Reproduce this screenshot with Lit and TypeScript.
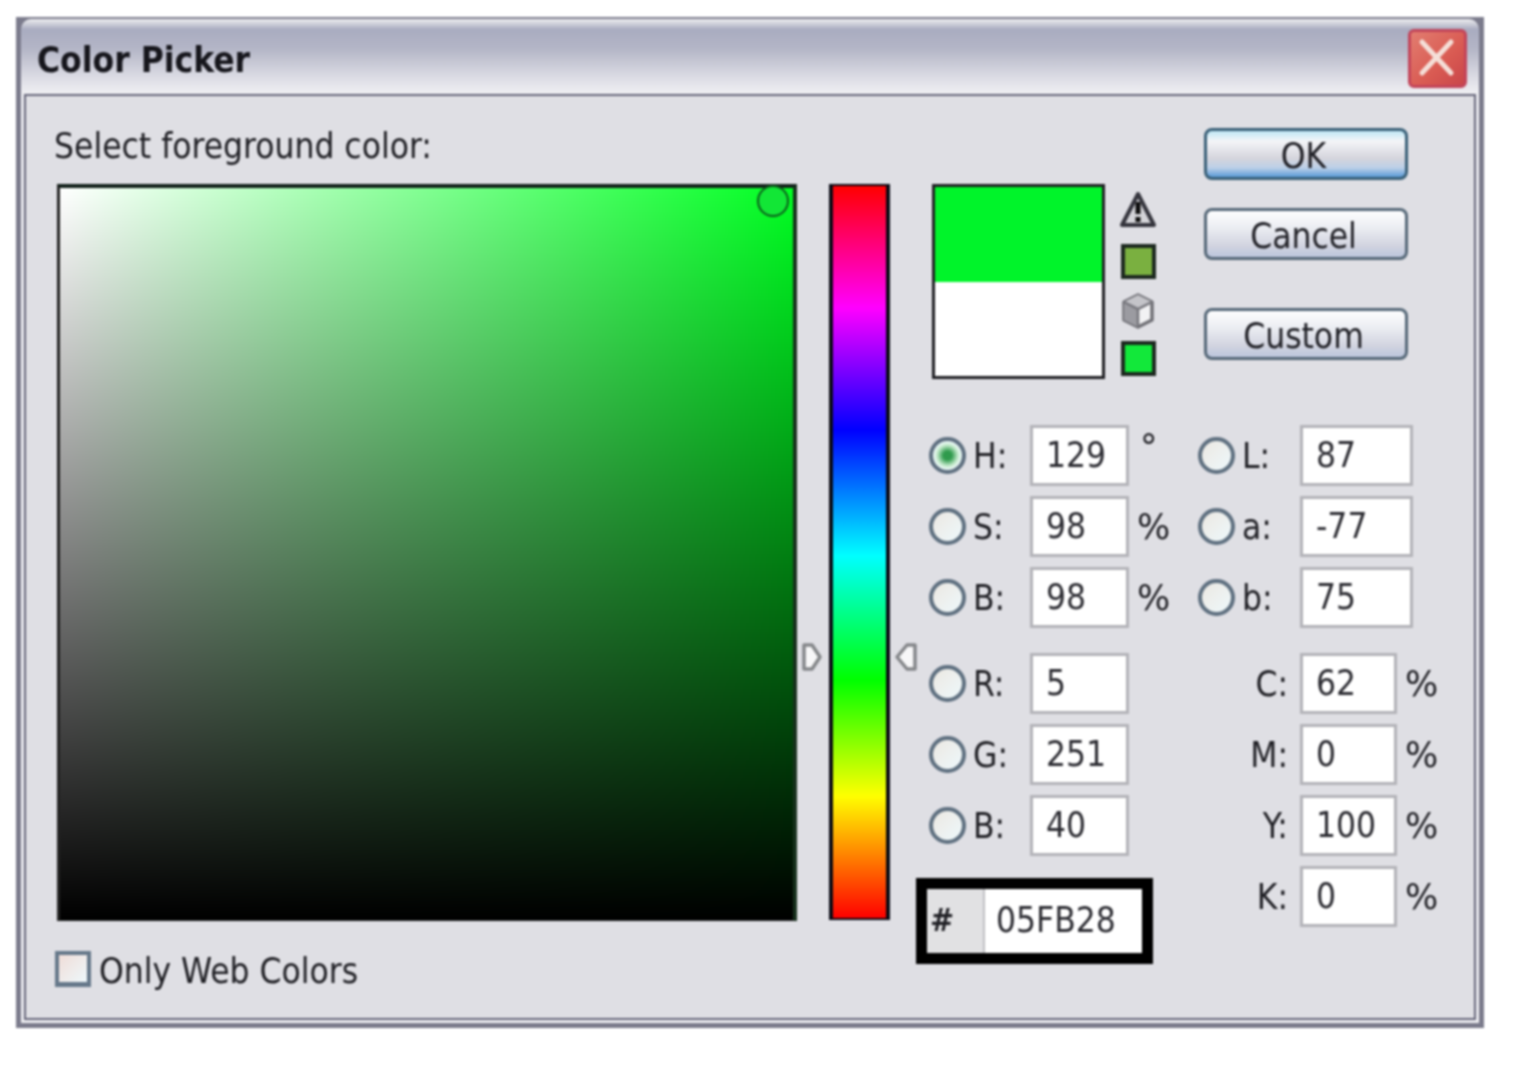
import { LitElement, css, html, nothing, type TemplateResult } from 'lit';
import { customElement } from 'lit/decorators.js';

interface Field {
  key: string;
  value: string;
  unit?: string;
  radio?: boolean;
  on?: boolean;
}

const HSB: Field[] = [
  { key: 'H:', value: '129', unit: '°', radio: true, on: true },
  { key: 'S:', value: '98', unit: '%', radio: true },
  { key: 'B:', value: '98', unit: '%', radio: true },
];
const RGB: Field[] = [
  { key: 'R:', value: '5', radio: true },
  { key: 'G:', value: '251', radio: true },
  { key: 'B:', value: '40', radio: true },
];
const LAB: Field[] = [
  { key: 'L:', value: '87', radio: true },
  { key: 'a:', value: '-77', radio: true },
  { key: 'b:', value: '75', radio: true },
];
const CMYK: Field[] = [
  { key: 'C:', value: '62', unit: '%' },
  { key: 'M:', value: '0', unit: '%' },
  { key: 'Y:', value: '100', unit: '%' },
  { key: 'K:', value: '0', unit: '%' },
];

@customElement('app-root')
export class AppRoot extends LitElement {
  private row(f: Field): TemplateResult {
    return html`
      <div class="row ${f.radio ? 'with-radio' : 'plain'}">
        ${f.radio ? html`<span class="radio ${f.on ? 'on' : ''}"></span>` : nothing}
        <span class="key">${f.key}</span>
        <span class="input">${f.value}</span>
        ${f.unit ? html`<span class="unit ${f.unit === '°' ? 'deg' : ''}">${f.unit}</span>` : nothing}
      </div>
    `;
  }

  override render(): TemplateResult {
    return html`
      <div class="window">
        <header class="titlebar">
          <span class="title">Color Picker</span>
          <button class="close" aria-label="Close">
            <svg viewBox="0 0 59 59" width="59" height="59">
              <path d="M14 13 L43 44 M43 13 L14 44" stroke="#f5dfd8" stroke-width="5" stroke-linecap="round" fill="none" />
            </svg>
          </button>
        </header>
        <div class="body">
          <section class="left">
            <div class="prompt">Select foreground color:</div>
            <div class="field"><span class="picker"></span></div>
            <label class="web">
              <span class="check"></span>
              <span>Only Web Colors</span>
            </label>
          </section>

          <section class="hue-wrap">
            <svg class="arrow arrow-l" viewBox="0 0 22 30" width="22" height="30">
              <path d="M3 3 H11 L19 15 L11 27 H3 Z" fill="#f7f7f8" stroke="#85878a" stroke-width="3.5" stroke-linejoin="round" />
            </svg>
            <div class="hue"></div>
            <svg class="arrow arrow-r" viewBox="0 0 24 30" width="24" height="30">
              <path d="M21 3 H13 L3 15 L13 27 H21 Z" fill="#f7f7f8" stroke="#85878a" stroke-width="3.5" stroke-linejoin="round" />
            </svg>
          </section>

          <section class="panel">
            <div class="top">
              <div class="swatch"><div class="new"></div><div class="old"></div></div>
              <div class="gamut">
                <svg viewBox="0 0 38 38" width="38" height="38">
                  <path d="M19 3 L35 34 H3 Z" fill="#d4d4d8" stroke="#35353d" stroke-width="4" stroke-linejoin="round" />
                  <path d="M19 11 V23 M19 26 V31" stroke="#0c0c0c" stroke-width="5" fill="none" />
                </svg>
                <span class="chip web-safe"></span>
                <svg class="cube" viewBox="0 0 34 36" width="34" height="36">
                  <path d="M17 2 L31 9 V27 L17 34 L3 27 V9 Z" fill="#f2f2f4" stroke="#707076" stroke-width="3.5" stroke-linejoin="round" />
                  <path d="M3 9 L17 2 L31 9 L17 16 Z" fill="#c4c4c9" />
                  <path d="M3 9 L17 16 V34 L3 27 Z" fill="#9b9ba1" />
                  <path d="M3 9 L17 16 L31 9 M17 16 V34" stroke="#77777d" stroke-width="2.5" fill="none" />
                </svg>
                <span class="chip gamut-ok"></span>
              </div>
              <div class="buttons">
                <button class="btn primary">OK</button>
                <button class="btn">Cancel</button>
                <button class="btn custom">Custom</button>
              </div>
            </div>

            <div class="fields">
              <div class="stack first">
                ${HSB.map((f) => this.row(f))}
                <div class="spacer"></div>
                ${RGB.map((f) => this.row(f))}
                <div class="hex">
                  <span class="hash">#</span>
                  <span class="hex-value">05FB28</span>
                </div>
              </div>
              <div class="stack second">
                ${LAB.map((f) => this.row(f))}
                <div class="spacer"></div>
                ${CMYK.map((f) => this.row(f))}
              </div>
            </div>
          </section>
        </div>
      </div>
    `;
  }

  static override styles = css`
    :host {
      display: block;
      width: 1535px;
      height: 1084px;
      box-sizing: border-box;
      padding: 17px 0 0 16px;
      background: #fff;
      font-family: 'DejaVu Sans Condensed', 'DejaVu Sans', sans-serif;
      font-stretch: condensed;
      color: #202025;
      font-size: 35px;
    }
    .window {
      width: 1468px;
      height: 1011px;
      box-sizing: border-box;
      border-style: solid;
      border-color: #7b7b8c;
      border-width: 2px 5px 5px 5px;
      background: #7b7b8c;
      display: flex;
      flex-direction: column;
      filter: blur(0.9px);
    }
    .titlebar {
      height: 75px;
      flex: none;
      display: flex;
      align-items: flex-start;
      justify-content: space-between;
      box-sizing: border-box;
      padding: 10px 12px 0 16px;
      background: linear-gradient(#eceDf0 0, #d5d6de 5%, #a9acc0 14%, #b4b6c7 40%, #dcdce4 78%, #f0f0f4 100%);
      border-radius: 10px 10px 0 0;
    }
    .title {
      font-weight: 700;
      font-size: 35px;
      line-height: 62px;
      color: #16161c;
    }
    .close {
      width: 59px;
      height: 59px;
      padding: 0;
      border: 3px solid #c2455a;
      border-radius: 6px;
      box-sizing: border-box;
      background: linear-gradient(135deg, #e27d70, #d95a52 60%, #c9464a);
      display: flex;
      align-items: center;
      justify-content: center;
    }
    .close svg { flex: none; }
    .body {
      flex: 1;
      display: flex;
      margin: 0 3px 3px;
      box-sizing: border-box;
      border: 2px solid #66667a;
      box-shadow: 0 0 0 3px #ececf0;
      padding-left: 31px;
      background: #dfdfe4;
    }
    .left { width: 740px; flex: none; }
    .prompt {
      margin-top: 30px;
      height: 40px;
      margin-bottom: 18px;
      line-height: 40px;
      margin-left: -3px;
    }
    .field {
      position: relative;
      width: 740px;
      height: 737px;
      box-sizing: border-box;
      border-style: solid;
      border-color: #12201a #17301c #2a2d2c #222;
      border-width: 4px 4px 1px 3px;
      background:
        linear-gradient(to top, #000, rgba(0, 0, 0, 0)),
        linear-gradient(to right, #fff, #00ff22);
    }
    .picker {
      position: absolute;
      right: 4px;
      top: -3px;
      width: 28px;
      height: 28px;
      border: 2px solid #0d5a1c;
      border-radius: 50%;
      background: #12e636;
    }
    .web {
      display: flex;
      align-items: center;
      gap: 8px;
      margin-top: 29px;
      margin-left: -2px;
      height: 38px;
    }
    .web span:last-child { padding-top: 4px; }
    .check {
      width: 36px;
      height: 36px;
      box-sizing: border-box;
      border: 4px solid #66788a;
      border-bottom-width: 5px;
      background: linear-gradient(135deg, #f0ddd8, #eef8fb);
    }
    .hue-wrap {
      position: relative;
      flex: none;
      width: 61px;
      margin: 88px 0 0 32px;
      height: 736px;
    }
    .hue {
      height: 100%;
      box-sizing: border-box;
      border: solid #0a0a14;
      border-width: 2px 4px;
      background: linear-gradient(#ff0000, #ff00ff 16.67%, #0000ff 33.33%, #00ffff 50.5%, #00ff00 67.5%, #ffff00 83.33%, #ff0000);
    }
    .arrow { position: absolute; top: 458px; }
    .arrow-l { left: -28px; }
    .arrow-r { right: -28px; }
    .panel {
      flex: none;
      width: 540px;
      margin-left: 26px;
      padding-top: 32px;
      box-sizing: border-box;
    }
    .top {
      height: 297px;
      display: flex;
      padding-left: 16px;
    }
    .swatch {
      flex: none;
      width: 173px;
      height: 195px;
      margin-top: 56px;
      box-sizing: border-box;
      border: 3px solid #1e1e22;
      display: flex;
      flex-direction: column;
    }
    .new { flex: 1; background: #00f42a; }
    .old { flex: 1; background: #fff; }
    .gamut {
      flex: none;
      width: 40px;
      margin: 63px 0 0 13px;
      display: flex;
      flex-direction: column;
      align-items: center;
    }
    .chip {
      display: block;
      width: 35px;
      height: 35px;
      box-sizing: border-box;
      border: 4px solid #1c281f;
    }
    .web-safe { margin-top: 15px; background: #7ab040; }
    .cube { margin-top: 14px; }
    .gamut-ok { margin-top: 12px; background: #12e83a; }
    .buttons {
      flex: none;
      width: 204px;
      margin-left: 46px;
      display: flex;
      flex-direction: column;
      gap: 28px;
    }
    .btn {
      width: 204px;
      height: 52px;
      padding: 3px 5px 0 0;
      font: inherit;
      color: #202026;
      border: 3px solid #566878;
      border-radius: 8px;
      background: linear-gradient(#fdfdfe, #eceef3 35%, #d2d4e0 75%, #bcc6dc);
    }
    .btn.primary {
      border-color: #3a6078;
      background: linear-gradient(#bfe6f4, #f4f5f8 22%, #d4d4dc 60%, #bcd0e8 80%, #5a9ad6);
    }
    .btn.custom { margin-top: 20px; }
    .fields {
      display: flex;
    }
    .stack {
      display: flex;
      flex-direction: column;
      gap: 10px;
    }
    .stack.first { width: 282px; flex: none; }
    .spacer { height: 5px; }
    .row {
      display: flex;
      align-items: center;
      height: 61px;
    }
    .first .row { padding-left: 13px; }
    .radio {
      flex: none;
      width: 37px;
      height: 37px;
      box-sizing: border-box;
      border: 4px solid #5f7080;
      border-radius: 50%;
      background: linear-gradient(135deg, #ece8e2, #eef8fb);
      margin-right: 7px;
    }
    .radio.on {
      background: radial-gradient(circle, #2f9a4c 0, #2f9a4c 20%, #c9ecd0 52%, #eef8fb 70%);
    }
    .key { flex: none; width: 57px; }
    .second .key { width: 58px; }
    .plain .key {
      width: 102px;
      padding-right: 12px;
      box-sizing: border-box;
      text-align: right;
    }
    .input {
      flex: none;
      width: 99px;
      height: 61px;
      box-sizing: border-box;
      padding-left: 13px;
      border: 3px solid #b3b3b8;
      background: #fff;
      line-height: 54px;
      color: #2c2c32;
    }
    .second .with-radio .input { width: 113px; }
    .plain .input { width: 97px; }
    .unit {
      margin-left: 8px;
      font-family: 'DejaVu Sans', sans-serif;
      font-stretch: normal;
      font-size: 35px;
    }
    .unit.deg { align-self: flex-start; line-height: 44px; margin-left: 11px; }
    .hex {
      display: flex;
      width: 237px;
      height: 86px;
      margin-top: 12px;
      box-sizing: border-box;
      border: 11px solid #000;
      background: #fff;
      line-height: 62px;
    }
    .hash {
      width: 58px;
      flex: none;
      box-sizing: border-box;
      padding-left: 3px;
      font-size: 32px;
      font-weight: 700;
      background: #e1e1e3;
      border-right: 2px solid #c0c0c4;
    }
    .hex-value { padding-left: 11px; color: #2c2c32; }
  `;
}

declare global {
  interface HTMLElementTagNameMap {
    'app-root': AppRoot;
  }
}
